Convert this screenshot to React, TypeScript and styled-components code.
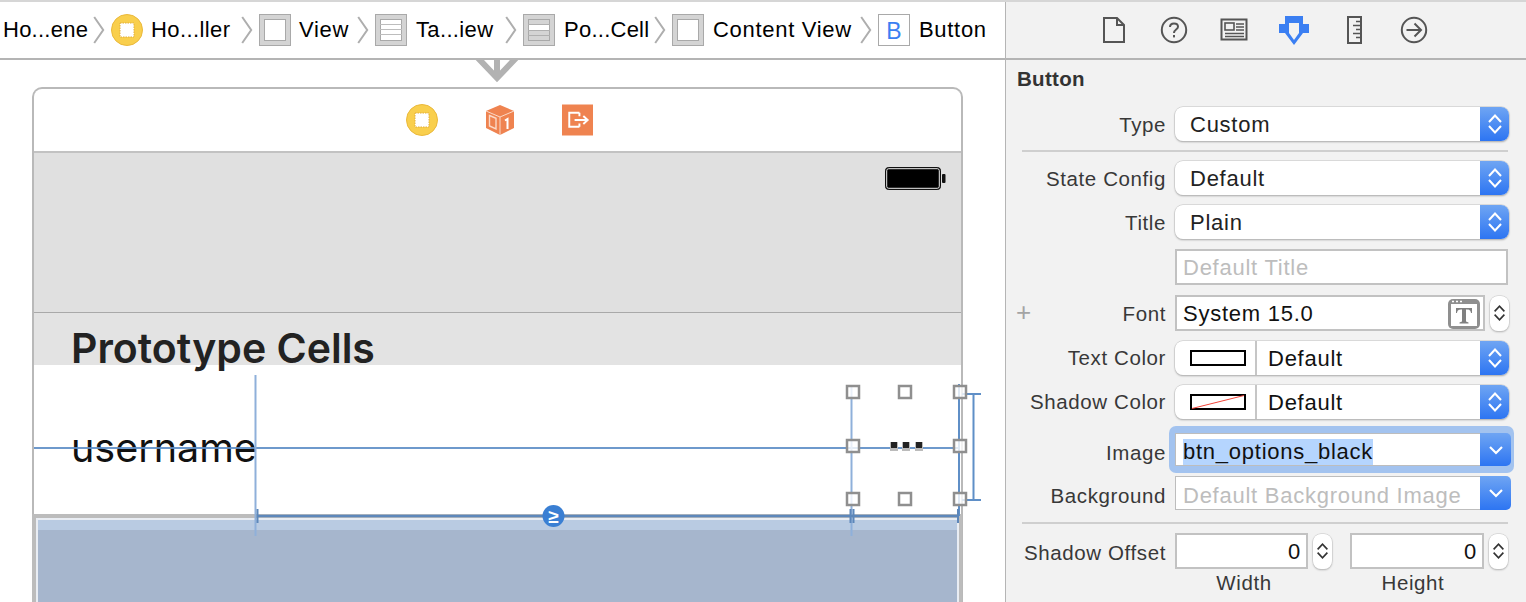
import React from "react";
import styled, { createGlobalStyle } from "styled-components";

const Global = createGlobalStyle`
  html, body { margin: 0; padding: 0; background: #fff; }
  * { box-sizing: border-box; }
  body { font-family: "Liberation Sans", Arial, sans-serif; }
`;

const Page = styled.div`
  width: 1526px;
  height: 602px;
  overflow: hidden;
  display: flex;
  border-top: 2px solid #d6d6d6;
`;

/* ---------- left side ---------- */
const Editor = styled.div`
  width: 1006px;
  flex: none;
  display: flex;
  flex-direction: column;
  border-right: 1px solid #b5b5b5;
  background: #fff;
`;

const Crumbs = styled.div`
  height: 58px;
  flex: none;
  display: flex;
  align-items: center;
  padding-left: 3px;
  border-bottom: 2px solid #b4b4b4;
  background: #fff;
  color: #000;
  font-size: 22px;
`;

const Crumb = styled.span<{ $w: number; $ml?: number; $ls?: number }>`
  width: ${(p) => p.$w}px;
  flex: none;
  white-space: nowrap;
  letter-spacing: ${(p) => p.$ls ?? 0.7}px;
  margin-left: ${(p) => p.$ml ?? 8}px;
  &:first-child { margin-left: 0; }
`;

const ChevronWrap = styled.span`
  flex: none;
  display: flex;
  margin-right: 6px;
`;

const Canvas = styled.div`
  position: relative;
  flex: 1;
  padding: 27px 0 0 32px;
  overflow: hidden;
`;

const Guides = styled.svg`
  position: absolute;
  left: 0;
  top: 0;
`;

const Arrow = styled.svg`
  position: absolute;
  left: 472px;
  top: 0;
`;

const Device = styled.div`
  width: 931px;
  height: 560px;
  border: 2px solid #b9b9b9;
  border-bottom: 0;
  border-radius: 10px 10px 0 0;
  display: flex;
  flex-direction: column;
`;

const Dock = styled.div`
  height: 64px;
  flex: none;
  border-bottom: 2px solid #c2c2c2;
  display: flex;
  align-items: center;
  padding-left: 372px;
  gap: 47px;
`;

const StatusArea = styled.div`
  height: 160px;
  flex: none;
  background: #e0e0e0;
  border-bottom: 1px solid #a9a9a9;
  display: flex;
  justify-content: flex-end;
  padding: 14px 15px 0 0;
`;

const SectionHead = styled.div`
  position: relative;
  height: 52px;
  flex: none;
  background: #e3e3e3;
  padding-left: 37px;
  font-family: Inter, sans-serif;
  font-weight: 600;
  font-size: 41px;
  line-height: 70px;
  color: #222;
  white-space: nowrap;
`;

const Cell = styled.div`
  height: 149px;
  flex: none;
  background: #fff;
  padding-left: 37px;
  font-family: Inter, sans-serif;
  font-size: 39.5px;
  line-height: 166px;
  color: #111;
`;

const Selection = styled.div`
  flex: 1;
  margin-left: -2px;
  margin-right: -1px;
  border: 4px solid #bcbcbc;
  border-right-width: 3px;
  background: linear-gradient(#b9cbe2 0 12px, #a6b6cd 12px);
  box-shadow: inset 0 0 0 2px #e9edf3;
`;

/* ---------- inspector ---------- */
const Inspector = styled.div`
  flex: 1;
  background: #f2f2f2;
  display: flex;
  flex-direction: column;
  color: #333;
`;

const Tabs = styled.div`
  height: 58px;
  flex: none;
  border-bottom: 2px solid #b4b4b4;
  display: flex;
  align-items: center;
  justify-content: center;
  padding-right: 4px;
`;

const Tab = styled.span`
  width: 60px;
  display: flex;
  justify-content: center;
`;

const PanelTitle = styled.div`
  font-weight: 700;
  font-size: 20.5px;
  line-height: 22px;
  margin: 8px 0 0 11px;
  letter-spacing: 0.3px;
`;

const Form = styled.div`
  display: flex;
  flex-direction: column;
  padding-top: 17px;
`;

const Row = styled.div<{ $mt?: number }>`
  display: flex;
  align-items: center;
  position: relative;
  margin-top: ${(p) => p.$mt ?? 10}px;
`;

const Label = styled.span<{ $nudge?: number }>`
  width: 160px;
  flex: none;
  margin-right: 9px;
  padding-top: ${(p) => p.$nudge ?? 2}px;
  text-align: right;
  font-size: 20.5px;
  letter-spacing: 0.6px;
  white-space: nowrap;
  color: #383838;
`;

const Plus = styled.span`
  position: absolute;
  left: 10px;
  top: 4px;
  color: #a4a4a4;
  font-size: 26px;
  line-height: 26px;
`;

const Select = styled.div`
  width: 334px;
  height: 34px;
  flex: none;
  display: flex;
  align-items: stretch;
  background: #fff;
  border-radius: 8px;
  box-shadow: 0 0 0 0.5px #c4c4c4, 0 1px 2px rgba(0, 0, 0, 0.35);
  overflow: hidden;
  font-size: 22px;
  color: #222;
  letter-spacing: 0.75px;
`;

const SelectValue = styled.span`
  flex: 1;
  padding-left: 15px;
  line-height: 35px;
`;

const Swatch = styled.span`
  width: 82px;
  flex: none;
  display: flex;
  align-items: center;
  padding-left: 15px;
  border-right: 2px solid #c6c6c6;
`;

const ColorValue = styled.span`
  flex: 1;
  padding-left: 11px;
  line-height: 35px;
  color: #111;
`;

const Stepper = styled.span`
  width: 29px;
  flex: none;
  display: flex;
  align-items: center;
  justify-content: center;
  background: linear-gradient(#6fa5f3, #2d75f2);
`;

const Input = styled.div<{ $w: number; $h?: number; $placeholder?: boolean; $right?: boolean }>`
  width: ${(p) => p.$w}px;
  height: ${(p) => p.$h ?? 36}px;
  flex: none;
  display: flex;
  align-items: center;
  justify-content: ${(p) => (p.$right ? "flex-end" : "space-between")};
  background: #fff;
  border: 2px solid #c2c2c2;
  padding: 2px ${(p) => (p.$right ? 5 : 3)}px 0 6px;
  font-size: 22px;
  letter-spacing: 0.75px;
  color: ${(p) => (p.$placeholder ? "#bdbdbd" : "#111")};
`;

const MiniStepper = styled.span`
  width: 19px;
  height: 35px;
  flex: none;
  margin-left: 5px;
  display: flex;
  align-items: center;
  justify-content: center;
  background: #fff;
  border-radius: 8px;
  box-shadow: 0 0 0 0.5px #c8c8c8, 0 1px 2px rgba(0, 0, 0, 0.3);
`;

const OffsetGap = styled.span`
  width: 18px;
  flex: none;
`;

const Focus = styled.div`
  margin: -7px 0 -7px -6px;
  padding: 7px 3px 7px 6px;
  border-radius: 7px;
  background: #a3c3ef;
  flex: none;
`;

const Combo = styled.div<{ $h: number; $disabled?: boolean }>`
  width: 336px;
  height: ${(p) => p.$h}px;
  display: flex;
  align-items: stretch;
  font-size: 22px;
  letter-spacing: 0.75px;
  color: ${(p) => (p.$disabled ? "#bdbdbd" : "#111")};
`;

const ComboText = styled.span`
  flex: 1;
  background: #fff;
  border: 1px solid #bdbdbd;
  border-right: 0;
  padding: 5px 0 0 7px;
  display: flex;
  align-items: center;
`;

const Highlight = styled.span`
  background: #b5d5fe;
  line-height: 26px;
`;

const ComboButton = styled.span`
  width: 31px;
  flex: none;
  display: flex;
  align-items: center;
  justify-content: center;
  background: linear-gradient(#6fa5f3, #2d75f2);
  border-radius: 0 5px 5px 0;
`;

const Divider = styled.div<{ $mt: number }>`
  height: 2px;
  background: #cfcfcf;
  margin: ${(p) => p.$mt}px 18px 0 16px;
`;

const Captions = styled.div`
  display: flex;
  margin-top: 2px;
  padding-left: 169px;
`;

const Caption = styled.span<{ $w: number }>`
  width: ${(p) => p.$w}px;
  text-align: center;
  font-size: 20.5px;
  letter-spacing: 0.6px;
  color: #383838;
`;

/* ---------- icons ---------- */
const Chevron = () => (
  <ChevronWrap>
    <svg width="12" height="28" viewBox="0 0 12 28">
      <path d="M1.2 1L10.2 14L1.2 27" fill="none" stroke="#aeaeae" strokeWidth="2" />
    </svg>
  </ChevronWrap>
);

const Box = ({ children, plain }: { children?: React.ReactNode; plain?: boolean }) => (
  <svg width="32" height="32" viewBox="0 0 32 32" style={{ flex: "none" }}>
    <rect x=".5" y=".5" width="31" height="31" fill={plain ? "#fff" : "#d4d4d4"} stroke="#a9a9a9" />
    {children}
  </svg>
);

const InnerWhite = () => <rect x="5.5" y="5.5" width="21" height="21" fill="#fff" stroke="#a9a9a9" />;

const TableLines = () => (
  <>
    <InnerWhite />
    <path d="M5 10.5H27M5 15.5H27M5 20.5H27" stroke="#bdbdbd" />
  </>
);

const CellLines = () => (
  <>
    <rect x="5.5" y="5.5" width="21" height="21" fill="#d4d4d4" stroke="#a9a9a9" />
    <rect x="6" y="11" width="20" height="5" fill="#fff" />
    <path d="M5 10.5H27M5 16.5H27M5 21.5H27" stroke="#b0b0b0" />
  </>
);

const Controller = ({ size }: { size: number }) => (
  <svg width={size} height={size} viewBox="0 0 32 32" style={{ flex: "none" }}>
    <circle cx="16" cy="16" r="15.5" fill="#f9cf4d" stroke="#eab93c" />
    <rect x="9" y="9" width="14" height="14" fill="#fff" stroke="#e2ae38" strokeDasharray="1.5 1" />
  </svg>
);

const Cube = () => (
  <svg width="30" height="32" viewBox="0 0 30 32" style={{ flex: "none" }}>
    <path d="M15 1L29 7V24L15 31L1 24V7Z" fill="#ef8350" />
    <path d="M1 7L15 13L29 7M15 13V31" fill="none" stroke="#fbd9c7" strokeWidth="1" />
    <path d="M4.5 11.5L11 14.3V25L4.5 22Z" fill="none" stroke="#fbd9c7" strokeWidth="1.4" />
    <path d="M20 16.5L22.5 15V25" fill="none" stroke="#fff" strokeWidth="2" />
  </svg>
);

const ExitIcon = () => (
  <svg width="31" height="32" viewBox="0 0 32 32" style={{ flex: "none" }}>
    <rect width="32" height="32" fill="#ef8350" />
    <path d="M18 8.5H7.5V23H18M18 8.5V12M18 23V19.5" fill="none" stroke="#fff" strokeWidth="2" />
    <path d="M13 16H26M22 11.8L26.5 16L22 20.2" fill="none" stroke="#fff" strokeWidth="2" />
  </svg>
);

const Battery = () => (
  <svg width="61" height="23" viewBox="0 0 61 23">
    <rect x=".5" y=".5" width="55" height="22" rx="3" fill="#000" stroke="#111" />
    <rect x="1.7" y="1.7" width="52.6" height="19.6" rx="2" fill="none" stroke="#eee" strokeWidth="1" />
    <rect x="57" y="7" width="3.5" height="9" rx="1" fill="#111" />
  </svg>
);

const I = "#555";
const FileIcon = () => (
  <svg width="24" height="28" viewBox="0 0 24 28">
    <path d="M2 2H15L22 9V26H2Z M15 2V9H22" fill="none" stroke={I} strokeWidth="2" />
  </svg>
);
const HelpIcon = () => (
  <svg width="28" height="28" viewBox="0 0 28 28">
    <circle cx="14" cy="14" r="12.2" fill="none" stroke={I} strokeWidth="2" />
    <path d="M10 11C10 8.4 12 7.4 14 7.4C16.2 7.4 18 8.6 18 10.8C18 13.6 14 13.6 14 17" fill="none" stroke={I} strokeWidth="2" />
    <rect x="13" y="19" width="2" height="2.4" fill={I} />
  </svg>
);
const CardIcon = () => (
  <svg width="28" height="24" viewBox="0 0 28 24">
    <rect x="1.5" y="1.5" width="25" height="20" fill="none" stroke={I} strokeWidth="2" />
    <rect x="5" y="5" width="9" height="7" fill="none" stroke={I} strokeWidth="1.6" />
    <path d="M16 6H24M16 9H24M16 12H24M5 15.5H24M5 18.5H24" stroke={I} strokeWidth="1.4" />
  </svg>
);
const AttrIcon = () => (
  <svg width="30" height="29" viewBox="0 0 30 29">
    <path d="M6 0H24V8H30V17H24L15 29L6 17H0V8H6Z" fill="#3b7ff2" />
    <path d="M10 7H20V17L15 24L10 17Z" fill="#f2f2f2" />
  </svg>
);
const RulerIcon = () => (
  <svg width="15" height="28" viewBox="0 0 15 28">
    <rect x="1" y="1" width="13" height="26" fill="none" stroke={I} strokeWidth="2" />
    <path d="M14 5.5H9M14 9.5H6M14 13.5H9M14 17.5H6M14 21.5H9" stroke={I} strokeWidth="1.6" />
  </svg>
);
const GoIcon = () => (
  <svg width="28" height="28" viewBox="0 0 28 28">
    <circle cx="14" cy="14" r="12.2" fill="none" stroke={I} strokeWidth="2" />
    <path d="M6.5 14H20.5M14.5 7.5L21 14L14.5 20.5" fill="none" stroke={I} strokeWidth="2" />
  </svg>
);

const UpDown = ({ color = "#fff", w = 16 }: { color?: string; w?: number }) => (
  <svg width={w} height="26" viewBox="0 0 16 26">
    <path d="M2 11L8 4.5L14 11M2 15L8 21.5L14 15" fill="none" stroke={color} strokeWidth="2" />
  </svg>
);

const Down = () => (
  <svg width="16" height="12" viewBox="0 0 16 12">
    <path d="M2 3L8 9L14 3" fill="none" stroke="#fff" strokeWidth="2.2" />
  </svg>
);

const FontIcon = () => (
  <svg width="32" height="30" viewBox="0 0 32 30">
    <rect x="0" y="0" width="32" height="30" rx="5" fill="#8f8f8f" />
    <rect x="3" y="5" width="26" height="22" fill="#fff" />
    <path d="M4 2.5H6M8 2.5H10M12 2.5H14" stroke="#fff" strokeWidth="1.3" />
    <path d="M8 14V9H24V14H23C22.5 11 21.5 10.5 18 10.5V22.5L20.5 23.5V24.5H11.5V23.5L14 22.5V10.5C10.5 10.5 9.5 11 9 14Z" fill="#808080" />
  </svg>
);

const SwatchBox = ({ slash }: { slash?: boolean }) => (
  <svg width="56" height="16" viewBox="0 0 56 16">
    <rect x="1" y="1" width="54" height="14" fill="#fff" stroke="#000" strokeWidth="2" />
    {slash && <path d="M2 14.5L54 1.5" stroke="#f2453a" strokeWidth="1" />}
  </svg>
);

const HANDLES = [
  [853, 332], [905, 332], [960, 332],
  [853, 386], [960, 386],
  [853, 439], [905, 439], [960, 439],
];
const GUIDE = "#5f8fc7";

const Overlay = () => (
  <Guides width="1005" height="542" viewBox="0 0 1005 542">
    <path d="M34 388H960" stroke={GUIDE} strokeWidth="2" opacity=".9" />
    <path d="M255.5 315V476" stroke="#8fb0da" strokeWidth="2" />
    <path d="M851.5 325V476" stroke="#8fb0da" strokeWidth="2" />
    <path d="M959 324V456" stroke={GUIDE} strokeWidth="2" />
    <path d="M257.5 456H958" stroke="#5d87ba" strokeWidth="2.5" />
    <path d="M257.5 449V463M850.5 449V463M853.5 449V463M958 449V463" stroke="#5d87ba" strokeWidth="2" />
    <path d="M962 334H981M962 440H981M973.5 334V440" fill="none" stroke={GUIDE} strokeWidth="2" />
    <circle cx="553.5" cy="456" r="11" fill="#3a7fd3" />
    <text x="553.5" y="463" textAnchor="middle" fontFamily="Liberation Sans" fontWeight="700" fontSize="19" fill="#fff">≥</text>
    {[894, 906, 919].map((x) => (
      <g key={x}>
        <rect x={x - 4} y="382" width="8" height="9" fill="#bbb" />
        <rect x={x - 3} y="382" width="6" height="6" fill="#222" />
      </g>
    ))}
    {HANDLES.map(([x, y]) => (
      <rect key={`${x}-${y}`} x={x - 6} y={y - 6} width="12" height="12" fill="#fff" fillOpacity=".8" stroke="#8f8f8f" strokeWidth="2.5" />
    ))}
  </Guides>
);

const StepperPair = () => (
  <MiniStepper>
    <UpDown color="#333" w={13} />
  </MiniStepper>
);

export default function App() {
  return (
    <Page>
      <Global />
      <Editor>
        <Crumbs>
          <Crumb $w={90} $ls={0.25}>Ho...ene</Crumb>
          <Chevron />
          <Controller size={32} />
          <Crumb $w={90} $ls={0.4}>Ho...ller</Crumb>
          <Chevron />
          <Box><InnerWhite /></Box>
          <Crumb $w={58}>View</Crumb>
          <Chevron />
          <Box><TableLines /></Box>
          <Crumb $w={89} $ml={9} $ls={0.35}>Ta...iew</Crumb>
          <Chevron />
          <Box><CellLines /></Box>
          <Crumb $w={90} $ml={9} $ls={0.25}>Po...Cell</Crumb>
          <Chevron />
          <Box><InnerWhite /></Box>
          <Crumb $w={147} $ml={9}>Content View</Crumb>
          <Chevron />
          <Box plain>
            <text x="16" y="25" textAnchor="middle" fontFamily="Liberation Sans" fontSize="23" fill="#3b7ff2">B</text>
          </Box>
          <Crumb $w={70} $ml={9}>Button</Crumb>
        </Crumbs>
        <Canvas>
          <Device>
            <Dock>
              <Controller size={32} />
              <Cube />
              <ExitIcon />
            </Dock>
            <StatusArea>
              <Battery />
            </StatusArea>
            <SectionHead>Prototype Cells</SectionHead>
            <Cell>username</Cell>
            <Selection />
          </Device>
          <Arrow width="50" height="24" viewBox="0 0 50 24">
            <path d="M25 0V18M5 -3L25 18L45 -3" fill="none" stroke="#b2b2b2" strokeWidth="6" />
          </Arrow>
          <Overlay />
        </Canvas>
      </Editor>
      <Inspector>
        <Tabs>
          <Tab><FileIcon /></Tab>
          <Tab><HelpIcon /></Tab>
          <Tab><CardIcon /></Tab>
          <Tab><AttrIcon /></Tab>
          <Tab><RulerIcon /></Tab>
          <Tab><GoIcon /></Tab>
        </Tabs>
        <PanelTitle>Button</PanelTitle>
        <Form>
          <Row $mt={0}>
            <Label>Type</Label>
            <Select><SelectValue>Custom</SelectValue><Stepper><UpDown /></Stepper></Select>
          </Row>
          <Divider $mt={9} />
          <Row $mt={9}>
            <Label>State Config</Label>
            <Select><SelectValue>Default</SelectValue><Stepper><UpDown /></Stepper></Select>
          </Row>
          <Row>
            <Label>Title</Label>
            <Select><SelectValue>Plain</SelectValue><Stepper><UpDown /></Stepper></Select>
          </Row>
          <Row>
            <Label />
            <Input $w={333} $placeholder>Default Title</Input>
          </Row>
          <Row>
            <Plus>+</Plus>
            <Label>Font</Label>
            <Input $w={310}>System 15.0<FontIcon /></Input>
            <StepperPair />
          </Row>
          <Row>
            <Label $nudge={0}>Text Color</Label>
            <Select>
              <Swatch><SwatchBox /></Swatch>
              <ColorValue>Default</ColorValue>
              <Stepper><UpDown /></Stepper>
            </Select>
          </Row>
          <Row>
            <Label $nudge={0}>Shadow Color</Label>
            <Select>
              <Swatch><SwatchBox slash /></Swatch>
              <ColorValue>Default</ColorValue>
              <Stepper><UpDown /></Stepper>
            </Select>
          </Row>
          <Row $mt={14}>
            <Label $nudge={6}>Image</Label>
            <Focus>
              <Combo $h={33}>
                <ComboText><Highlight>btn_options_black</Highlight></ComboText>
                <ComboButton><Down /></ComboButton>
              </Combo>
            </Focus>
          </Row>
          <Row $mt={10}>
            <Label $nudge={6}>Background</Label>
            <Combo $h={34} $disabled>
              <ComboText>Default Background Image</ComboText>
              <ComboButton><Down /></ComboButton>
            </Combo>
          </Row>
          <Divider $mt={12} />
          <Row $mt={9}>
            <Label $nudge={3}>Shadow Offset</Label>
            <Input $w={133} $right>0</Input>
            <StepperPair />
            <OffsetGap />
            <Input $w={134} $right>0</Input>
            <StepperPair />
          </Row>
          <Captions>
            <Caption $w={138}>Width</Caption>
            <Caption $w={200}>Height</Caption>
          </Captions>
        </Form>
      </Inspector>
    </Page>
  );
}
